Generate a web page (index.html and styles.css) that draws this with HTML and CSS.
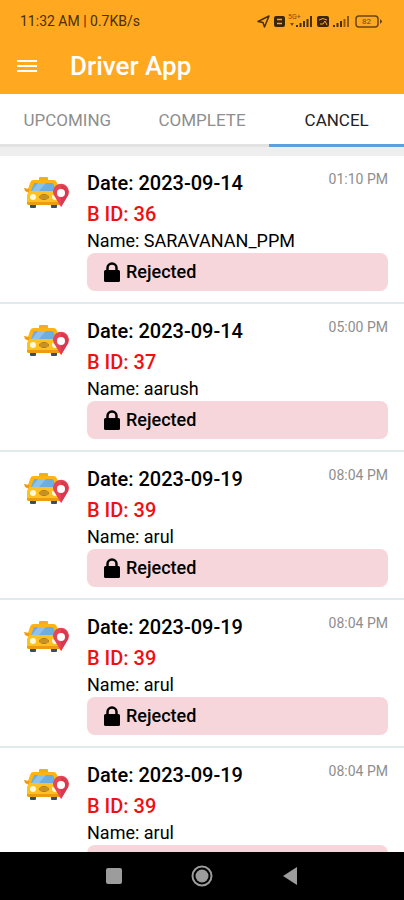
FILE: index.html
```
<!DOCTYPE html>
<html lang="en">
<head>
<meta charset="utf-8">
<meta name="viewport" content="width=device-width, initial-scale=1">
<title>Driver App</title>
<link rel="stylesheet" href="styles.css">
</head>
<body>
<svg class="sprites" aria-hidden="true">
  <symbol id="taxi" viewBox="0 0 46 34">
    <rect x="6" y="26" width="6" height="6" rx="1" fill="#36515c"/>
    <rect x="27" y="26" width="6" height="6" rx="1" fill="#36515c"/>
    <rect x="15" y="1" width="9" height="5" rx="1" fill="#f7ad17"/>
    <path d="M9 4h21q2 0 3 3l3 9H3l3-9q1-3 3-3z" fill="#fdb515"/>
    <path d="M0 12l5 1v4l-4-2zM40 12l-5 1v4l4-2z" fill="#ef9b12"/>
    <path d="M10 7h19l3 8H7z" fill="#6facdf"/>
    <path d="M14 7h8l-7 8H8z" fill="#8dc2ea"/>
    <path d="M5 15h29l3 4v8q0 2-2 2H5q-2 0-2-2v-8z" fill="#ffc021"/>
    <path d="M3 26h34v1q0 2-2 2H5q-2 0-2-2z" fill="#f09a12"/>
    <circle cx="9" cy="21" r="3" fill="#fff8d9"/>
    <circle cx="31" cy="21" r="3" fill="#fff8d9"/>
    <ellipse cx="20" cy="21" rx="5" ry="3" fill="#a87a22"/>
    <path d="M16 20h8M16 22h8" stroke="#e2a928" stroke-width="1"/>
    <path d="M37 31l-6-10a8 8 0 1 1 12 0z" fill="#e4475a"/>
    <path d="M37 31V9a8 8 0 0 1 6 12z" fill="#d63a50"/>
    <circle cx="37" cy="17" r="4" fill="#fff"/>
  </symbol>
  <symbol id="lock" viewBox="0 0 18 20">
    <path d="M4.500 9V6a4.500 4.500 0 0 1 9 0v3" fill="none" stroke="#000" stroke-width="2.500"/>
    <rect x="1" y="8" width="16" height="12" rx="1.500" fill="#000"/>
  </symbol>
</svg>

<header class="top">
  <div class="status">
    <span>11:32 AM | 0.7KB/s</span>
    <svg class="status-icons" viewBox="0 0 128 16" aria-hidden="true">
      <path d="M2 8.500L13 3 8.500 14 7 9.500z" fill="none" stroke="#4a2f08" stroke-width="1.500" stroke-linejoin="round"/>
      <rect x="18" y="3" width="11" height="11" rx="2" fill="#3c2608"/>
      <path d="M21 6.500h5M21 10.500h5" stroke="#ffa820" stroke-width="1.500"/>
      <text class="tiny-text" x="32" y="6">5G+</text>
      <path d="M34 10h4l-2 3z" fill="#7a4e10"/>
      <path d="M41 14v-2M44.500 14v-4M48 14V8M51.500 14V6M55 14V3" stroke="#4a2f08" stroke-width="2"/>
      <rect x="61" y="3" width="12" height="11" rx="2" fill="#3c2608"/>
      <path d="M63 7q4-3 8 0M64 11h3l2-3 2 4" fill="none" stroke="#ffa820" stroke-width="1"/>
      <path d="M78 14v-2M81.500 14v-4M85 14V8" stroke="#4a2f08" stroke-width="2"/>
      <path d="M88.500 14V6M92 14V3" stroke="#8b5a14" stroke-width="2"/>
      <rect x="100" y="3" width="22" height="11" rx="3" fill="none" stroke="#6b4510" stroke-width="1.500"/>
      <path d="M124 6v5l2-2V8z" fill="#6b4510"/>
      <text class="battery-text" x="106" y="11">82</text>
    </svg>
  </div>
  <div class="bar">
    <button class="menu" type="button" aria-label="Menu">
      <svg viewBox="0 0 20 14" aria-hidden="true"><path d="M0 2h20M0 7h20M0 12h20" stroke="#fff" stroke-width="2"/></svg>
    </button>
    <h1>Driver App</h1>
  </div>
</header>

<nav class="tabs">
  <button type="button">UPCOMING</button>
  <button type="button">COMPLETE</button>
  <button type="button" class="active" aria-current="page">CANCEL</button>
</nav>

<main class="list">
  <article class="trip">
    <svg class="taxi" aria-hidden="true"><use href="#taxi"/></svg>
    <div class="details">
      <div class="head"><h2>Date: 2023-09-14</h2><time>01:10 PM</time></div>
      <p class="bid">B ID: 36</p>
      <p class="name">Name: SARAVANAN_PPM</p>
      <p class="state"><svg aria-hidden="true"><use href="#lock"/></svg>Rejected</p>
    </div>
  </article>
  <article class="trip">
    <svg class="taxi" aria-hidden="true"><use href="#taxi"/></svg>
    <div class="details">
      <div class="head"><h2>Date: 2023-09-14</h2><time>05:00 PM</time></div>
      <p class="bid">B ID: 37</p>
      <p class="name">Name: aarush</p>
      <p class="state"><svg aria-hidden="true"><use href="#lock"/></svg>Rejected</p>
    </div>
  </article>
  <article class="trip">
    <svg class="taxi" aria-hidden="true"><use href="#taxi"/></svg>
    <div class="details">
      <div class="head"><h2>Date: 2023-09-19</h2><time>08:04 PM</time></div>
      <p class="bid">B ID: 39</p>
      <p class="name">Name: arul</p>
      <p class="state"><svg aria-hidden="true"><use href="#lock"/></svg>Rejected</p>
    </div>
  </article>
  <article class="trip">
    <svg class="taxi" aria-hidden="true"><use href="#taxi"/></svg>
    <div class="details">
      <div class="head"><h2>Date: 2023-09-19</h2><time>08:04 PM</time></div>
      <p class="bid">B ID: 39</p>
      <p class="name">Name: arul</p>
      <p class="state"><svg aria-hidden="true"><use href="#lock"/></svg>Rejected</p>
    </div>
  </article>
  <article class="trip">
    <svg class="taxi" aria-hidden="true"><use href="#taxi"/></svg>
    <div class="details">
      <div class="head"><h2>Date: 2023-09-19</h2><time>08:04 PM</time></div>
      <p class="bid">B ID: 39</p>
      <p class="name">Name: arul</p>
      <p class="state"></p>
    </div>
  </article>
</main>

<footer class="system">
  <button type="button" aria-label="Recent apps"><svg viewBox="0 0 22 22" aria-hidden="true"><rect x="3" y="3" width="16" height="16" rx="2" fill="#9c9c9c"/></svg></button>
  <button type="button" aria-label="Home"><svg viewBox="0 0 22 22" aria-hidden="true"><circle cx="11" cy="11" r="9.500" fill="none" stroke="#9c9c9c" stroke-width="2"/><circle cx="11" cy="11" r="6.500" fill="#9c9c9c"/></svg></button>
  <button type="button" aria-label="Back"><svg viewBox="0 0 22 22" aria-hidden="true"><path d="M4 11L18 2v18z" fill="#9c9c9c"/></svg></button>
</footer>
</body>
</html>
```
FILE: styles.css
```
* {
  box-sizing: border-box;
}

body {
  margin: 0;
  height: 100vh;
  display: flex;
  flex-direction: column;
  overflow: hidden;
  background: #fff;
  color: #000;
  font-family: Roboto, sans-serif;
}

h1, h2, p {
  margin: 0;
}

button {
  margin: 0;
  padding: 0;
  border: 0;
  background: none;
  font: inherit;
  color: inherit;
}

svg {
  display: block;
}

.sprites {
  position: absolute;
  width: 0;
  height: 0;
}

.top {
  flex: none;
  background: #ffa820;
}

.status {
  display: flex;
  align-items: center;
  justify-content: space-between;
  height: 40px;
  padding: 2px 20px 0;
  font-size: 14px;
  color: #4a2f08;
}

.status-icons {
  width: 128px;
  height: 16px;
}

.tiny-text {
  font-size: 7px;
  fill: #7a4e10;
}

.battery-text {
  font-size: 8px;
  fill: #6b4510;
}

.bar {
  display: flex;
  align-items: center;
  gap: 33px;
  height: 54px;
  padding: 0 17px 2px;
}

.menu {
  width: 20px;
  height: 14px;
}

h1 {
  color: #fff;
  font-size: 26px;
  font-weight: 500;
}

.tabs {
  flex: none;
  display: grid;
  grid-template-columns: repeat(3, 1fr);
  height: 62px;
  border-bottom: 9px solid #eeeeef;
}

.tabs button {
  padding-top: 2px;
  border-bottom: 3px solid #e2e2e2;
  font-size: 17px;
  color: #8e8e8e;
}

.tabs .active {
  border-color: #609fd9;
  color: #222;
}

.list {
  flex: 1;
  min-height: 0;
  overflow: hidden;
}

.trip {
  display: flex;
  gap: 17px;
  height: 148px;
  padding: 14px 16px 0 24px;
  border-bottom: 2px solid #dfeceb;
}

.taxi {
  flex: none;
  width: 46px;
  height: 34px;
  margin-top: 6px;
}

.details {
  flex: 1;
}

.head {
  display: flex;
  justify-content: space-between;
  height: 29px;
}

h2, .bid {
  font-size: 20px;
  font-weight: 500;
}

h2 {
  line-height: 26px;
}

.bid {
  line-height: 30px;
  color: #f01010;
}

time {
  font-size: 14px;
  line-height: 18px;
  color: #8e8e8e;
}

.name, .state {
  font-size: 18px;
  line-height: 24px;
}

.state {
  display: flex;
  align-items: center;
  gap: 5px;
  height: 38px;
  padding-left: 16px;
  border-radius: 8px;
  background: #f6d6da;
  font-weight: 500;
}

.state svg {
  width: 18px;
  height: 20px;
}

.system {
  flex: none;
  display: flex;
  align-items: center;
  justify-content: center;
  gap: 66px;
  height: 48px;
  background: #000;
}

.system button {
  width: 22px;
  height: 22px;
}
```
